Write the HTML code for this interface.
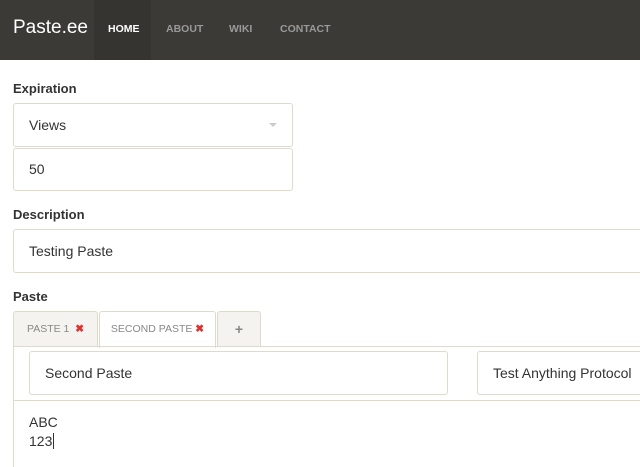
<!DOCTYPE html><html><head><style>
body{margin:0;width:640px;height:466px;overflow:hidden;background:#fff;font-family:"Liberation Sans",sans-serif;position:relative}
.a{position:absolute}
.nav{left:0;top:0;width:640px;height:60px;background:#3b3a36}
.box{position:absolute;border:1px solid #e0dacd;border-radius:3px;background:#fff;box-sizing:border-box;font-size:14px;color:#333;padding-left:15px}
.lbl{position:absolute;left:13px;font-size:13px;font-weight:bold;color:#333}
.tab{position:absolute;top:311px;height:36px;box-sizing:border-box;border:1px solid #e0dacd;border-bottom:none;border-radius:3px 3px 0 0;background:#f5f3ef;font-size:10.5px;color:#888;text-align:center;line-height:34px}
.x{color:#e03030;font-weight:bold}
</style></head><body>
<div class="a nav"></div>
<div class="a" style="left:94px;top:0;width:57px;height:60px;background:#353430"></div>
<div class="a" style="left:13px;top:17px;font-size:19px;color:#fff">Paste.ee</div>
<div class="a" style="left:108px;top:23px;font-size:10.5px;font-weight:bold;color:#fff">HOME</div>
<div class="a" style="left:166px;top:23px;font-size:10.5px;font-weight:bold;color:#999">ABOUT</div>
<div class="a" style="left:229px;top:23px;font-size:10.5px;font-weight:bold;color:#999">WIKI</div>
<div class="a" style="left:280px;top:23px;font-size:10.5px;font-weight:bold;color:#999">CONTACT</div>
<div class="lbl" style="top:81px">Expiration</div>
<div class="box" style="left:13px;top:103px;width:280px;height:44px;line-height:42px">Views<span style="position:absolute;right:15px;top:19px;width:0;height:0;border-left:4px solid transparent;border-right:4px solid transparent;border-top:4px solid #ccc"></span></div>
<div class="box" style="left:13px;top:148px;width:280px;height:43px;line-height:41px">50</div>
<div class="lbl" style="top:207px">Description</div>
<div class="box" style="left:13px;top:229px;width:640px;height:44px;line-height:42px">Testing Paste</div>
<div class="lbl" style="top:289px">Paste</div>
<div class="tab" style="left:13px;width:85px">PASTE 1 &nbsp;<span class="x">✖</span></div>
<div class="tab" style="left:99px;width:117px;background:#fff;height:37px">SECOND PASTE <span class="x">✖</span></div>
<div class="tab" style="left:217px;width:44px;font-size:14px;font-weight:bold">+</div>
<div class="a" style="left:13px;top:346px;width:627px;height:120px;border-left:1px solid #e0dacd;border-top:1px solid #e0dacd"></div>
<div class="a" style="left:216px;top:346px;width:424px;height:1px;background:#e0dacd"></div>
<div class="a" style="left:13px;top:346px;width:85px;height:1px;background:#e0dacd"></div>
<div class="box" style="left:29px;top:351px;width:419px;height:44px;line-height:42px">Second Paste</div>
<div class="box" style="left:477px;top:351px;width:200px;height:44px;line-height:42px">Test Anything Protocol</div>
<div class="a" style="left:14px;top:400px;width:626px;height:1px;background:#e0dacd"></div>
<div class="a" style="left:29px;top:413px;font-size:14px;color:#333;line-height:19px">ABC<br>123<span style="border-left:1px solid #333;margin-left:1px"></span></div>
</body></html>
